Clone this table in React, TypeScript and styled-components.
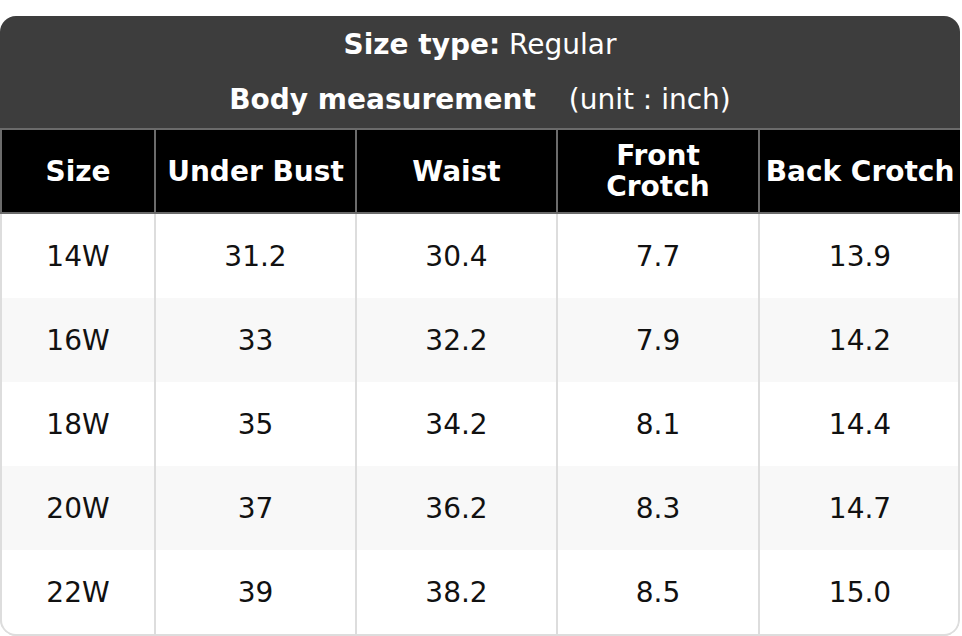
import styled, { createGlobalStyle } from "styled-components";

const GlobalStyle = createGlobalStyle`
  html, body {
    margin: 0;
    padding: 0;
    background: #ffffff;
  }
  body {
    font-family: "DejaVu Sans", "Liberation Sans", sans-serif;
  }
`;

const Page = styled.div`
  padding-top: 16px;
  width: 962px;
`;

const Card = styled.div`
  position: relative;
  width: 960px;
  border-radius: 16px;
  overflow: hidden;
  background: #ffffff;

  &::after {
    content: "";
    position: absolute;
    top: 198px;
    left: 0;
    right: 0;
    bottom: 0;
    border: 2px solid #dddddd;
    border-top: none;
    border-radius: 0 0 16px 16px;
    pointer-events: none;
  }
`;

const TitleBar = styled.div`
  background: #3d3d3d;
  color: #ffffff;
  height: 112px;
  box-sizing: border-box;
  padding-top: 9px;
  display: flex;
  flex-direction: column;
  align-items: center;
  gap: 15px;
  font-size: 28px;
`;

const TitleLine = styled.div`
  height: 40px;
  line-height: 40px;
  text-align: center;
`;

const Strong = styled.b`
  font-weight: 700;
`;

const Unit = styled.span`
  margin-left: 33px;
`;

const Table = styled.table`
  width: 960px;
  border-collapse: collapse;
  table-layout: fixed;
  font-size: 28px;
`;

const HeadCell = styled.th`
  background: #000000;
  color: #ffffff;
  font-weight: 700;
  height: 82px;
  padding: 0 2px;
  line-height: 31px;
  border: 2px solid #6b6b6b;
  text-align: center;
  vertical-align: middle;
`;

const Row = styled.tr<{ $shade: boolean }>`
  background: ${({ $shade }) => ($shade ? "#f8f8f8" : "#ffffff")};
`;

const Cell = styled.td`
  height: 84px;
  padding: 0;
  color: #111111;
  text-align: center;
  vertical-align: middle;
  border-left: 2px solid #dddddd;
  border-right: 2px solid #dddddd;

  tr:last-child > & {
    border-bottom: 2px solid #dddddd;
  }
`;

const columns = [
  { label: "Size", width: 154 },
  { label: "Under Bust", width: 201 },
  { label: "Waist", width: 201 },
  { label: "Front\nCrotch", width: 202 },
  { label: "Back Crotch", width: 202 },
];

const rows = [
  ["14W", "31.2", "30.4", "7.7", "13.9"],
  ["16W", "33", "32.2", "7.9", "14.2"],
  ["18W", "35", "34.2", "8.1", "14.4"],
  ["20W", "37", "36.2", "8.3", "14.7"],
  ["22W", "39", "38.2", "8.5", "15.0"],
];

export default function App() {
  return (
    <>
      <GlobalStyle />
      <Page>
        <Card>
          <TitleBar>
            <TitleLine>
              <Strong>Size type:</Strong> Regular
            </TitleLine>
            <TitleLine>
              <Strong>Body measurement</Strong>
              <Unit>(unit : inch)</Unit>
            </TitleLine>
          </TitleBar>
          <Table>
            <colgroup>
              {columns.map((c) => (
                <col key={c.label} style={{ width: c.width }} />
              ))}
            </colgroup>
            <thead>
              <tr>
                {columns.map((c) => (
                  <HeadCell key={c.label}>
                    {c.label.split("\n").map((part, i) => (
                      <div key={i}>{part}</div>
                    ))}
                  </HeadCell>
                ))}
              </tr>
            </thead>
            <tbody>
              {rows.map((r, i) => (
                <Row key={r[0]} $shade={i % 2 === 1}>
                  {r.map((v, j) => (
                    <Cell key={j}>{v}</Cell>
                  ))}
                </Row>
              ))}
            </tbody>
          </Table>
        </Card>
      </Page>
    </>
  );
}
